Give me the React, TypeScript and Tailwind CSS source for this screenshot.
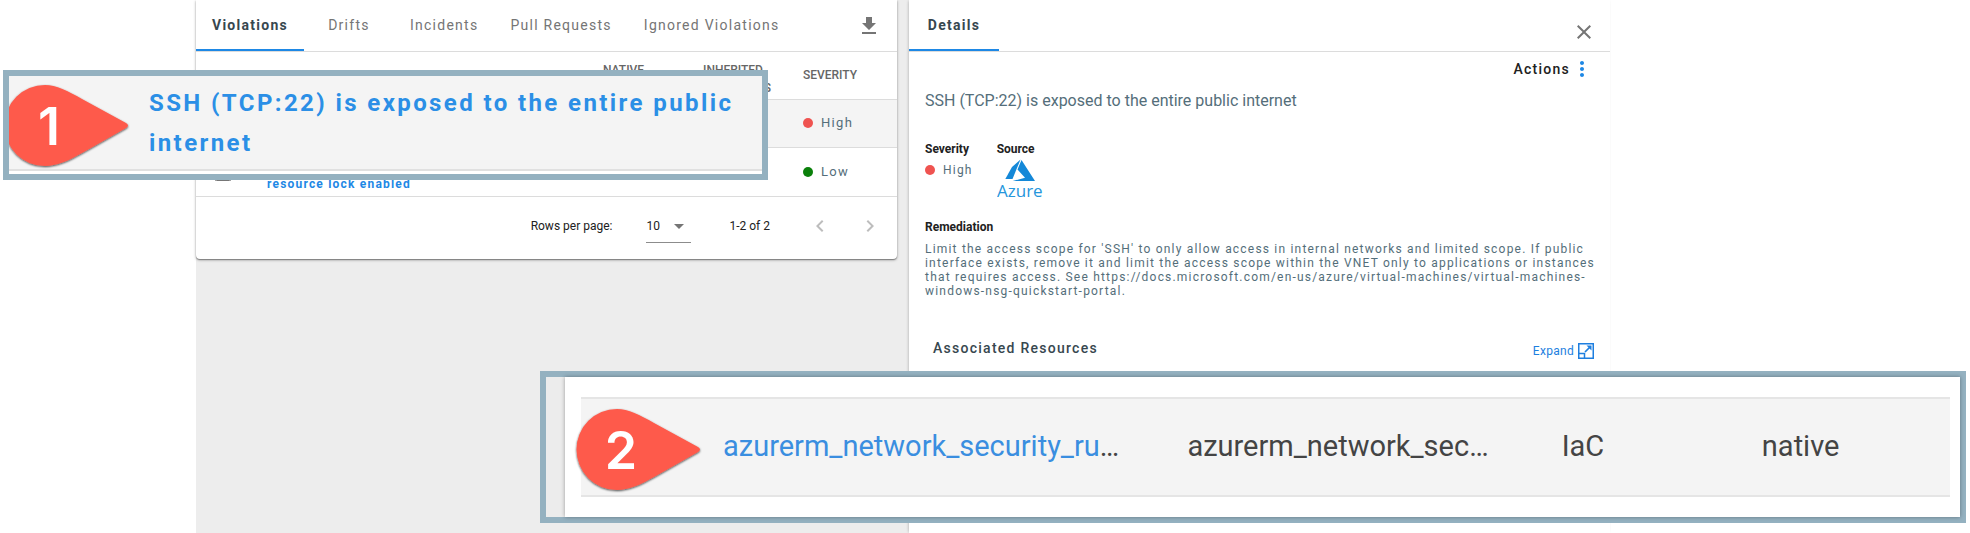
import React from "react";

const tabs = ["Violations", "Drifts", "Incidents", "Pull Requests", "Ignored Violations"];

type IconProps = { d: string; className?: string; size?: number };

function Icon({ d, className = "", size = 24 }: IconProps) {
  return (
    <svg viewBox="0 0 24 24" width={size} height={size} fill="currentColor" aria-hidden="true" className={`shrink-0 ${className}`}>
      <path d={d} />
    </svg>
  );
}

function Tab({ label, active }: { label: string; active?: boolean }) {
  return (
    <button
      role="tab"
      aria-selected={!!active}
      className={`h-[51px] min-w-[90px] border-b-2 px-4 pt-px text-sm tracking-[0.09em] whitespace-nowrap ${
        active ? "border-[#1e88e5] font-bold text-[#37474f]" : "border-transparent text-[#757575]"
      }`}
    >
      {label}
    </button>
  );
}

function Severity({ level, className = "" }: { level: "High" | "Low"; className?: string }) {
  return (
    <span className={`flex items-center gap-2 tracking-widest text-[#546e7a] ${className}`}>
      <span className={`size-[10px] rounded-full ${level === "High" ? "bg-[#ef5350]" : "bg-[#0a800a]"}`} />
      {level}
    </span>
  );
}

function Pin({ value, className }: { value: string; className: string }) {
  return (
    <svg viewBox="0 0 132 90" width="132" height="90" role="img" aria-label={`Step ${value}`} className={className}>
      <defs>
        <filter id={`shade-${value}`} x="-10%" y="-10%" width="120%" height="130%">
          <feDropShadow dx="0" dy="1" stdDeviation="1" floodOpacity="0.7" />
        </filter>
      </defs>
      <path
        d="M43 3C54 3 66 9 80 17L124 41Q128 43.500 124 46L80 71C66 79 54 84 43 84A40.500 40.500 0 0 1 43 3Z"
        fill="#fe5a4b"
        filter={`url(#shade-${value})`}
      />
      <text x="47" y="63" textAnchor="middle" fontSize="52" fontWeight="600" fontFamily="Inter, Liberation Sans, sans-serif" fill="#fff">
        {value}
      </text>
    </svg>
  );
}

function AzureLogo() {
  return (
    <svg viewBox="0 0 46 40" width="46" height="40" role="img" aria-label="Azure">
      <path d="M23.500 .5L15 8L8.300 20H15.500Z" fill="#1488d8" />
      <path d="M24.500 1L38 22H15.700L28 18.800L20.500 10.500Z" fill="#1488d8" />
      <text x="0" y="38" fontSize="17" fontFamily="Open Sans, Noto Sans, sans-serif" fill="#2596dc">
        Azure
      </text>
    </svg>
  );
}

function ViolationsPanel() {
  return (
    <section className="self-start rounded-b bg-white pb-2 shadow-[0_1px_3px_rgba(0,0,0,0.35),0_1px_1px_rgba(0,0,0,0.3)]">
      <div role="tablist" className="flex h-[52px] border-b border-[#dcdcdc]">
        {tabs.map((t, i) => (
          <Tab key={t} label={t} active={i === 0} />
        ))}
        <button aria-label="Download" className="mr-4 ml-auto self-center pt-px text-[#757575]">
          <Icon d="M19 9h-4V3H9v6H5l7 7 7-7zM5 18v2h14v-2H5z" />
        </button>
      </div>
      <table className="w-full table-fixed text-left">
        <thead>
          <tr className="h-[47px] border-b border-[#dcdcdc] text-xs leading-[18px] text-[#666]">
            <th className="w-[71px]" />
            <th className="font-medium">VIOLATION</th>
            <th className="w-[100px] pt-2 font-medium">NATIVE VIOLATIONS</th>
            <th className="w-[100px] pt-2 font-medium">INHERITED VIOLATIONS</th>
            <th className="w-[94px] font-medium">SEVERITY</th>
          </tr>
        </thead>
        <tbody>
          <tr className="h-12 border-b border-[#dcdcdc] bg-[#f4f4f4]">
            <td className="pl-[18px] align-middle">
              <input type="checkbox" aria-label="Select SSH violation" className="block size-[18px]" />
            </td>
            <td className="pr-[100px] text-xs leading-3 font-bold tracking-widest text-[#1e88e5]">
              <a href="#ssh">SSH (TCP:22) is exposed</a>
            </td>
            <td />
            <td />
            <td><Severity level="High" className="text-[13px]" /></td>
          </tr>
          <tr className="h-[49px] border-b border-[#dcdcdc]">
            <td className="pl-[18px] align-middle">
              <input type="checkbox" aria-label="Select resource lock violation" className="block size-[18px]" />
            </td>
            <td className="text-xs leading-3 font-bold tracking-widest text-[#1e88e5]">
              <a href="#lock">
                Ensure that Azure<br />Resource Group has<br />resource lock enabled
              </a>
            </td>
            <td />
            <td />
            <td><Severity level="Low" className="text-[13px]" /></td>
          </tr>
        </tbody>
      </table>
      <div className="flex h-[54px] items-center justify-end pt-[5px] pr-[15px] text-xs text-[#212121]">
        <label htmlFor="rows" className="mr-[34px]">Rows per page:</label>
        <div className="relative mr-[38px] border-b border-[#8c8c8c]">
          <select id="rows" defaultValue="10" className="h-8 w-[45px] appearance-none bg-transparent">
            <option>10</option>
          </select>
          <Icon d="M7 10l5 5 5-5z" className="pointer-events-none absolute top-1 right-0 text-[#757575]" />
        </div>
        <span className="mr-[38px]">1-2 of 2</span>
        <button aria-label="Previous page" disabled className="mr-[26px] text-[#bdbdbd]">
          <Icon d="M15.41 16.59L10.83 12l4.58-4.59L14 6l-6 6 6 6z" />
        </button>
        <button aria-label="Next page" disabled className="text-[#bdbdbd]">
          <Icon d="M8.59 16.59L13.17 12 8.59 7.41 10 6l6 6-6 6z" />
        </button>
      </div>
    </section>
  );
}

function DetailsPanel() {
  return (
    <section className="bg-white shadow-[-1px_0_3px_-1px_rgba(0,0,0,0.3)]">
      <div role="tablist" className="flex h-[52px] border-b border-[#dcdcdc]">
        <Tab label="Details" active />
        <button aria-label="Close" className="mt-3 mr-[14px] ml-auto text-[#757575]">
          <Icon d="M19 6.41L17.59 5 12 10.59 6.41 5 5 6.41 10.59 12 5 17.59 6.41 19 12 13.41 17.59 19 19 17.59 13.41 12z" />
        </button>
      </div>
      <div className="px-4">
        <button className="ml-auto flex h-[34px] items-center text-sm font-medium tracking-[0.09em] text-[#212121]">
          Actions
          <Icon
            className="text-[#1e88e5]"
            d="M12 8c1.1 0 2-.9 2-2s-.9-2-2-2-2 .9-2 2 .9 2 2 2zm0 2c-1.1 0-2 .9-2 2s.9 2 2 2 2-.9 2-2-.9-2-2-2zm0 6c-1.1 0-2 .9-2 2s.9 2 2 2 2-.9 2-2-.9-2-2-2z"
          />
        </button>
        <h1 className="mt-[3px] text-base leading-6 text-[#546e7a]">SSH (TCP:22) is exposed to the entire public internet</h1>
        <div className="mt-7 flex gap-6 text-xs leading-4">
          <div>
            <h2 className="font-bold text-[#212121]">Severity</h2>
            <Severity level="High" className="mt-[5px]" />
          </div>
          <div>
            <h2 className="mb-[2px] font-bold text-[#212121]">Source</h2>
            <AzureLogo />
          </div>
        </div>
        <h2 className="mt-5 text-xs leading-4 font-bold text-[#212121]">Remediation</h2>
        <p className="-mr-2 mt-[7px] text-xs leading-[14px] tracking-widest text-[#546e7a]">
          Limit the access scope for 'SSH' to only allow access in internal networks and limited scope. If public
          interface exists, remove it and limit the access scope within the VNET only to applications or instances
          that requires access. See https://docs.microsoft.com/en-us/azure/virtual-machines/virtual-machines-windows-nsg-quickstart-portal.
        </p>
        <div className="mt-[39px] flex items-center justify-between pl-2">
          <h2 className="text-sm font-medium tracking-[0.09em] text-[#37474f]">Associated Resources</h2>
          <button className="mt-[6px] flex items-center gap-1 text-xs tracking-wide text-[#1e7fe0]">
            Expand
            <svg viewBox="0 0 16 16" width="16" height="16" fill="none" stroke="currentColor" aria-hidden="true">
              <path d="M.75 .75h14.500v14.500H.75zM1 10.500h5.500V15" strokeWidth="1.500" />
              <path d="M7 9l5-5" strokeWidth="1.700" />
              <path d="M8.500 2.500H13.500V7.500Z" fill="currentColor" stroke="none" />
            </svg>
          </button>
        </div>
      </div>
    </section>
  );
}

export default function App() {
  return (
    <div className="relative min-h-screen overflow-hidden bg-white font-[Roboto,sans-serif]">
      <main className="mr-[360px] ml-[196px] grid min-h-screen grid-cols-2 gap-3 bg-[#ededed]">
        <ViolationsPanel />
        <DetailsPanel />
      </main>

      <aside className="absolute top-[70px] left-[3px] w-[765px] overflow-hidden border-6 border-[#94b1c0] bg-white pb-[3px]">
        <div className="h-[95px] border-b-2 border-[#e0e0e0] bg-[#f4f4f4] pt-[7px] pl-[140px]">
          <a href="#ssh" className="block text-2xl leading-10 font-bold tracking-widest text-[#2b8fe6]">
            SSH (TCP:22) is exposed to the entire public internet
          </a>
        </div>
        <Pin value="1" className="absolute top-[6px] -left-[7px]" />
      </aside>

      <aside className="absolute top-[371px] right-[4px] left-[540px] border-6 border-[#94b1c0] bg-[#ececec] pl-[19px]">
        <div className="bg-white py-5 pr-[10px] pl-4 shadow-[0_0_4px_rgba(0,0,0,0.35)]">
          <div className="grid h-[100px] grid-cols-[464fr_374fr_200fr_188fr] items-center border-y-2 border-[#e5e5e5] bg-[#f4f4f4] pl-[142px] text-[29px] text-[#444]">
            <span>
              <a href="#resource" className="text-[#3a8ee0]">azurerm_network_security_ru</a>…
            </span>
            <span>azurerm_network_sec…</span>
            <span>IaC</span>
            <span>native</span>
          </div>
        </div>
        <Pin value="2" className="absolute top-[29px] left-[28px]" />
      </aside>
    </div>
  );
}
